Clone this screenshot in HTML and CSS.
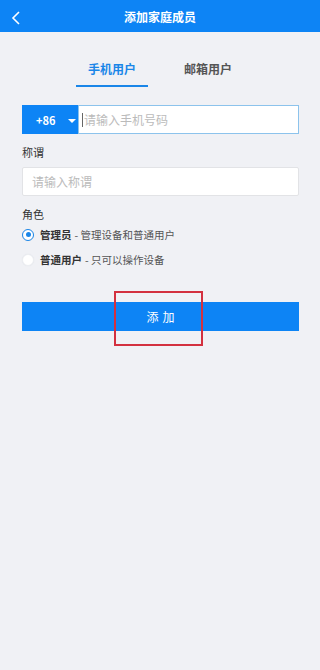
FILE: index.html
```html
<!DOCTYPE html>
<html lang="zh-CN">

<head>
    <meta charset="UTF-8">
    <meta name="viewport" content="width=device-width, initial-scale=1.0">
    <title>添加家庭成员</title>
    <link rel="stylesheet" href="styles.css">
</head>

<body>
    <div class="header">
        <svg class="back" width="10" height="14" viewBox="0 0 10 14">
            <path d="M8 1 L2 7 L8 13" fill="none" stroke="#fff" stroke-width="1.6" />
        </svg>
        <div class="title">添加家庭成员</div>
    </div>
    <div class="tabs">
        <div class="tab active">手机用户</div>
        <div class="tab">邮箱用户</div>
    </div>
    <div class="form">
        <div class="phone">
            <div class="code">+86 <span class="tri"></span></div>
            <div class="phone_input"><span class="caret"></span>请输入手机号码</div>
        </div>
        <div class="label">称谓</div>
        <div class="input">请输入称谓</div>
        <div class="label">角色</div>
        <div class="radio">
            <span class="dot checked"></span><b>管理员</b> - 管理设备和普通用户
        </div>
        <div class="radio">
            <span class="dot"></span><b>普通用户</b> - 只可以操作设备
        </div>
        <div class="btn_wrap">
            <div class="btn">添加</div>
            <div class="mark"></div>
        </div>
    </div>
</body>

</html>
```

FILE: styles.css
```css
body {
    margin: 0;
    width: 320px;
    height: 670px;
    background-color: #f0f1f5;
    font-family: "Noto Sans CJK SC", "Liberation Sans", sans-serif;
    color: #333;
}

.header {
    display: flex;
    justify-content: center;
    align-items: center;
    position: relative;
    height: 32px;
    background-color: #0d84f5;
    color: #fff;
}

.back {
    position: absolute;
    left: 11px;
    top: 11px;
}

.title {
    font-size: 12px;
    font-weight: bold;
}

.tabs {
    display: flex;
    justify-content: center;
    gap: 24px;
    margin-top: 26px;
    height: 29px;
}

.tab {
    width: 72px;
    height: 27px;
    text-align: center;
    font-size: 12px;
    font-weight: bold;
    color: #555;
    line-height: 22px;
    border-bottom: 2px solid transparent;
}

.tab.active {
    color: #1a86e8;
    border-bottom-color: #1a86e8;
}

.form {
    padding: 18px 21px 0 22px;
}

.phone {
    display: flex;
    height: 29px;
}

.code {
    display: flex;
    align-items: center;
    width: 56px;
    box-sizing: border-box;
    padding-left: 14px;
    background-color: #0d84f5;
    color: #fff;
    font-size: 11px;
    font-weight: bold;
}

.tri {
    margin-left: 13px;
    margin-top: 2px;
    border-left: 4px solid transparent;
    border-right: 4px solid transparent;
    border-top: 4px solid #fff;
}

.phone_input {
    display: flex;
    align-items: center;
    flex: 1;
    background-color: #fff;
    border: 1px solid #8cc3ec;
    color: #bbb;
    font-size: 12px;
    padding-left: 3px;
}

.caret {
    width: 1px;
    height: 14px;
    background-color: #666;
    margin-right: 1px;
}

.label {
    margin-top: 10px;
    height: 16px;
    font-size: 11px;
    line-height: 16px;
    color: #333;
}

.input {
    margin-top: 7px;
    height: 29px;
    box-sizing: border-box;
    padding-left: 9px;
    display: flex;
    align-items: center;
    background-color: #fff;
    border: 1px solid #e2e3e6;
    border-radius: 2px;
    color: #bbb;
    font-size: 12px;
}

.radio {
    display: flex;
    align-items: center;
    height: 25px;
    font-size: 10.5px;
    color: #555;
}

.radio b {
    color: #333;
    margin-right: 3px;
}

.dot {
    width: 10px;
    height: 10px;
    border-radius: 50%;
    background-color: #fff;
    border: 1px solid #eceef2;
    box-shadow: 0 0 1px #dde0e5;
    margin-right: 6px;
    position: relative;
}

.dot.checked {
    border-color: #1a86e8;
}

.dot.checked::after {
    content: "";
    position: absolute;
    left: 2.5px;
    top: 2.5px;
    width: 5px;
    height: 5px;
    border-radius: 50%;
    background-color: #1a86e8;
}

.btn_wrap {
    position: relative;
    margin-top: 30px;
}

.btn {
    height: 29px;
    line-height: 29px;
    text-align: center;
    background-color: #0d84f5;
    color: #fff;
    font-size: 12px;
    letter-spacing: 4px;
    text-indent: 4px;
}

.mark {
    position: absolute;
    left: 92px;
    top: -11px;
    width: 85px;
    height: 51px;
    border: 2px solid #d3313f;
}
```
